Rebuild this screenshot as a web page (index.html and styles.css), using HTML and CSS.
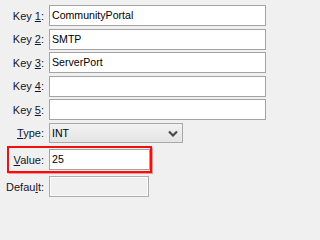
FILE: index.html
```html
<!DOCTYPE html>
<html>
<head>
<meta charset="utf-8">
<link rel="stylesheet" href="styles.css">
</head>
<body>
<div class="form">
  <div class="row">
    <label class="lbl">Key <u>1</u>:</label>
    <div class="field wide">CommunityPortal</div>
  </div>
  <div class="row">
    <label class="lbl">Key <u>2</u>:</label>
    <div class="field wide">SMTP</div>
  </div>
  <div class="row">
    <label class="lbl">Key <u>3</u>:</label>
    <div class="field wide">ServerPort</div>
  </div>
  <div class="row">
    <label class="lbl">Key <u>4</u>:</label>
    <div class="field wide"></div>
  </div>
  <div class="row">
    <label class="lbl">Key <u>5</u>:</label>
    <div class="field wide"></div>
  </div>
  <div class="row gap3">
    <label class="lbl"><u>T</u>ype:</label>
    <div class="select">
      <span>INT</span>
      <svg class="chev" width="10" height="7" viewBox="0 0 10 7"><polyline points="1,1.5 5,5.5 9,1.5" fill="none" stroke="#4a4a4a" stroke-width="2.2"/></svg>
    </div>
  </div>
  <div class="row gap3 highlight">
    <label class="lbl lbl-hl"><u>V</u>alue:</label>
    <div class="field short">25</div>
  </div>
  <div class="row gap3">
    <label class="lbl">Defau<u>l</u>t:</label>
    <div class="field short2 disabled"></div>
  </div>
</div>
</body>
</html>
```

FILE: styles.css
```css
html, body {
  margin: 0;
  padding: 0;
  background: #f0f0f0;
}
body {
  font-family: "Liberation Sans", Arial, sans-serif;
  font-size: 11px;
  color: #111;
}
.form {
  width: 271px;
  display: flex;
  flex-direction: column;
  gap: 2.5px;
  padding-top: 5px;
}
.row {
  display: flex;
  align-items: center;
}
.gap3 {
  margin-top: 0.5px;
}
.lbl {
  width: 44px;
  margin-right: 5px;
  text-align: right;
  white-space: nowrap;
  color: #15152a;
}
.lbl-hl {
  width: 35px;
}
.field {
  height: 19px;
  border: 1px solid #a3a3a3;
  background: #fff;
  box-sizing: content-box;
  padding-left: 2px;
  line-height: 19px;
  font-size: 10.6px;
  color: #000;
  white-space: nowrap;
  overflow: hidden;
}
.wide {
  flex: 1;
  margin-right: 5px;
}
.short {
  width: 97px;
}
.short2 {
  width: 96px;
}
.disabled {
  background: #f0f0f0;
  border-color: #adadad;
  box-shadow: inset 0 0 0 1px #fbfbfb;
}
.select {
  width: 130px;
  height: 18px;
  border: 1px solid #a8a8a8;
  background: linear-gradient(#f2f2f2, #e4e4e4);
  padding-left: 2px;
  display: flex;
  align-items: center;
  justify-content: space-between;
  font-size: 10.6px;
  color: #000;
}
.chev {
  margin-right: 4px;
}
.highlight {
  margin-left: 7px;
  width: 141px;
  border: 2px solid #f01010;
  padding: 1px 0;
  box-shadow: 0 0 1px 0.5px #ff9090;
}
```
